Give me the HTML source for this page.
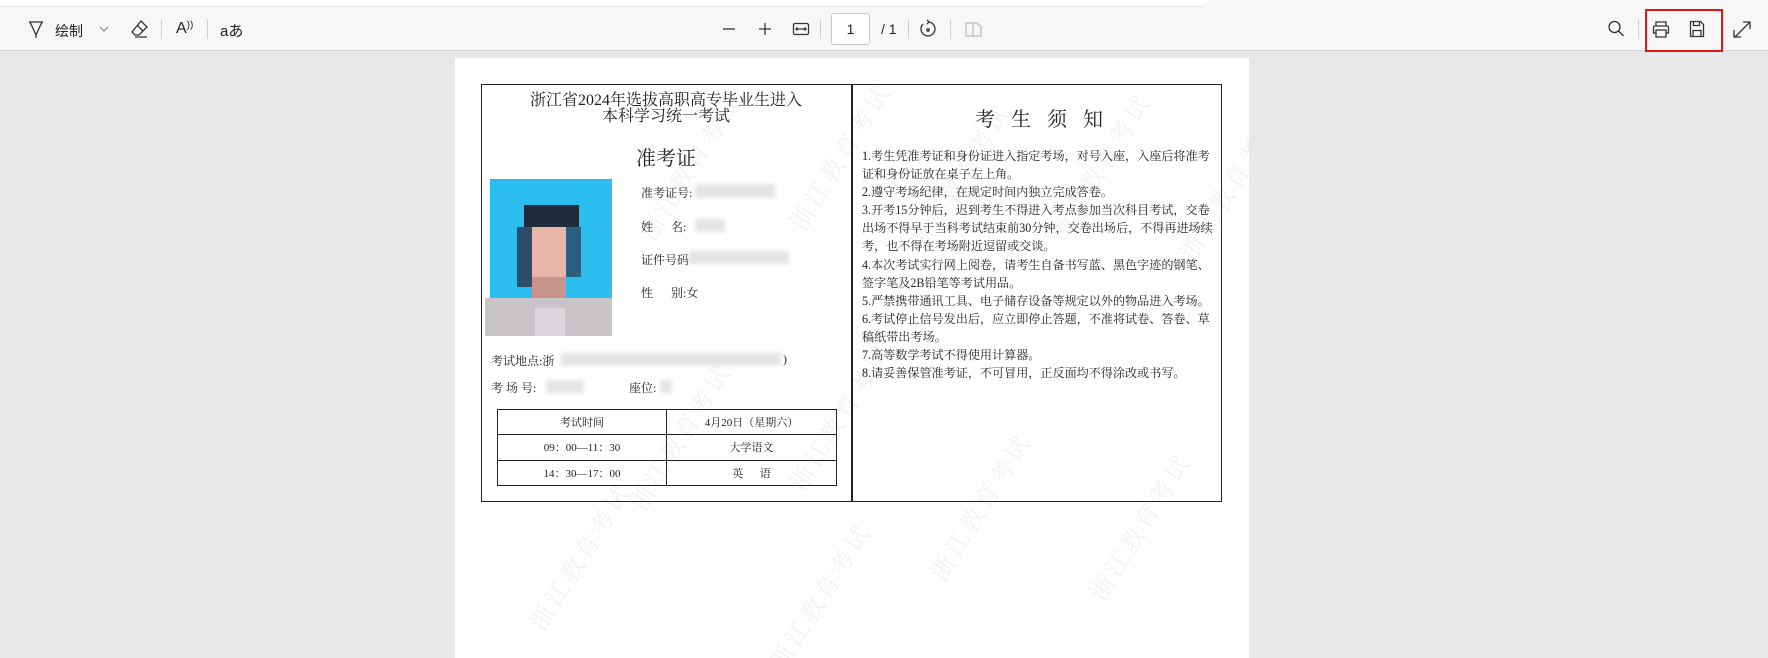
<!DOCTYPE html>
<html><head><meta charset="utf-8">
<style>
*{margin:0;padding:0;box-sizing:border-box}
body{width:1768px;height:626px;overflow:hidden;background:#e8e8e8;font-family:"Liberation Serif","Noto Serif CJK SC",serif;position:relative}
.top{position:absolute;left:0;top:0;width:1768px;height:51px;background:#f7f7f7;border-bottom:1px solid #d6d6d6}
.strip{position:absolute;left:0;top:0;width:1208px;height:7px;background:#fff;border-radius:0 0 8px 0;border-bottom:1px solid #e4e4e4}
.ic{position:absolute;top:19px}
.sep{position:absolute;top:19px;width:1px;height:20px;background:#cfcfcf}
.t{position:absolute;font-family:"Liberation Sans","Noto Sans CJK SC",sans-serif;color:#222}
.page{position:absolute;left:455px;top:58px;width:794px;height:600px;background:#fff;overflow:hidden}
.a{position:absolute;white-space:nowrap;color:#222}
.wm{position:absolute;color:#f1f1f1;font-size:24px;transform:rotate(-58deg);white-space:nowrap;letter-spacing:4px;font-family:"Noto Serif CJK SC",serif}
.blur{position:absolute;background:#e4e4e4;filter:blur(2px)}
.px{position:absolute}
</style></head><body>
<div class="top">
<div class="strip"></div>
<svg class="ic" style="left:27px" width="18" height="20" viewBox="0 0 18 20" fill="none" stroke="#333" stroke-width="1.3"><path d="M2 3h14M3 3l6 13 6-13M9 16v3"/></svg>
<div class="t" style="left:55px;top:21px;font-size:14px">绘制</div>
<svg class="ic" style="left:99px;top:26px" width="10" height="6" viewBox="0 0 10 6" fill="none" stroke="#777" stroke-width="1.1"><path d="M1 1l4 4 4-4"/></svg>
<svg class="ic" style="left:131px" width="18" height="20" viewBox="0 0 18 20" fill="none" stroke="#333" stroke-width="1.3"><path d="M10 2l6 6-8 8H4l-3-3z M6 6l6 6 M4 18h12"/></svg>
<div class="sep" style="left:161px"></div>
<div class="t" style="left:176px;top:20px;font-size:16px">A<span style="font-size:10px;vertical-align:top">))</span></div>
<div class="sep" style="left:207px"></div>
<div class="t" style="left:220px;top:20px;font-size:15px">aあ</div>

<svg class="ic" style="left:721px" width="16" height="20"><path d="M2 10h12" stroke="#333" stroke-width="1.3"/></svg>
<svg class="ic" style="left:757px" width="16" height="20"><path d="M2 10h12M8 4v12" stroke="#333" stroke-width="1.3"/></svg>
<svg class="ic" style="left:792px" width="18" height="20" fill="none" stroke="#333" stroke-width="1.3"><rect x="1.5" y="4.5" width="15" height="11" rx="1.5"/><path d="M4 10h10M5.5 8.5L4 10l1.5 1.5M12.5 8.5L14 10l-1.5 1.5"/></svg>
<div class="sep" style="left:820px"></div>
<div style="position:absolute;left:831px;top:13px;width:39px;height:32px;background:#fff;border:1px solid #c8c8c8;border-radius:3px;font-family:'Liberation Sans',sans-serif;font-size:14px;text-align:center;line-height:30px;color:#222">1</div>
<div class="t" style="left:881px;top:21px;font-size:14px">/ 1</div>
<div class="sep" style="left:908px"></div>
<svg class="ic" style="left:919px" width="18" height="20" fill="none" stroke="#333" stroke-width="1.3"><path d="M4 5a7 7 0 1 0 6-2l-2-2M10 3l-2 2"/><circle cx="9" cy="11" r="1.2"/></svg>
<div class="sep" style="left:950px"></div>
<svg class="ic" style="left:964px" width="18" height="20" fill="none" stroke="#bbb" stroke-width="1.2"><path d="M2 4h7v13H2zM9 4h4l4 4v9H9"/></svg>

<svg class="ic" style="left:1607px" width="18" height="20" fill="none" stroke="#333" stroke-width="1.3"><circle cx="7.5" cy="8" r="5.5"/><path d="M11.5 12l5 5"/></svg>
<div class="sep" style="left:1638px"></div>
<svg class="ic" style="left:1652px" width="18" height="20" fill="none" stroke="#333" stroke-width="1.3"><path d="M4 7V3h10v4M3 7h12a1.5 1.5 0 0 1 1.5 1.5V14H14M4 14H1.5V8.5A1.5 1.5 0 0 1 3 7M4 11h10v7H4z"/></svg>
<svg class="ic" style="left:1688px" width="18" height="20" fill="none" stroke="#333" stroke-width="1.3"><path d="M2.5 2.5h10l3 3v12h-13zM5.5 2.5v4h6v-4M5 17.5v-6h8v6"/></svg>
<div style="position:absolute;left:1645px;top:9px;width:78px;height:43px;border:2px solid #e8141b"></div>
<svg class="ic" style="left:1733px" width="18" height="20" fill="none" stroke="#333" stroke-width="1.3"><path d="M2 18L16 4M10 3h7v7M1 11v7h7"/></svg>
</div>

<div class="page">
<div class="wm" style="left:150px;top:90px">浙江教育考试</div>
<div class="wm" style="left:300px;top:80px">浙江教育考试</div>
<div class="wm" style="left:420px;top:100px">浙江教育考试</div>
<div class="wm" style="left:560px;top:90px">浙江教育考试</div>
<div class="wm" style="left:690px;top:110px">浙江教育考试</div>
<div class="wm" style="left:140px;top:360px">浙江教育考试</div>
<div class="wm" style="left:300px;top:340px">浙江教育考试</div>
<div class="wm" style="left:440px;top:430px">浙江教育考试</div>
<div class="wm" style="left:600px;top:450px">浙江教育考试</div>
<div class="wm" style="left:280px;top:520px">浙江教育考试</div>
<div class="wm" style="left:40px;top:480px">浙江教育考试</div>

<div style="position:absolute;left:26px;top:26px;width:741px;height:418px;border:1.5px solid #222"></div>
<div style="position:absolute;left:396px;top:26px;width:1.5px;height:418px;background:#222"></div>

<div class="a" style="left:26px;width:370px;text-align:center;top:35px;font-size:16px;line-height:16px">浙江省2024年选拔高职高专毕业生进入<br>本科学习统一考试</div>
<div class="a" style="left:26px;width:370px;text-align:center;top:84px;font-size:20px">准考证</div>

<div class="px" style="left:35px;top:121px;width:122px;height:134px;background:#2cbdf0"></div>
<div class="px" style="left:69px;top:147px;width:55px;height:22px;background:#1d2b3a"></div>
<div class="px" style="left:62px;top:169px;width:15px;height:60px;background:#2b4d68"></div>
<div class="px" style="left:111px;top:169px;width:15px;height:50px;background:#2b5f80"></div>
<div class="px" style="left:77px;top:169px;width:34px;height:80px;background:#e8b5a8"></div>
<div class="px" style="left:77px;top:219px;width:34px;height:40px;background:#c9958a"></div>
<div class="px" style="left:30px;top:240px;width:127px;height:38px;background:#c8c4c8"></div>
<div class="px" style="left:80px;top:250px;width:30px;height:28px;background:#dad6dc"></div>

<div class="a" style="left:186px;top:126px;font-size:12px">准考证号:</div>
<div class="blur" style="left:240px;top:126px;width:80px;height:14px"></div>
<div class="a" style="left:186px;top:160px;font-size:12px">姓&nbsp;&nbsp;&nbsp;&nbsp;&nbsp;&nbsp;名:</div>
<div class="blur" style="left:240px;top:161px;width:30px;height:13px"></div>
<div class="a" style="left:186px;top:193px;font-size:12px">证件号码</div>
<div class="blur" style="left:234px;top:193px;width:100px;height:13px"></div>
<div class="a" style="left:186px;top:226px;font-size:12px">性&nbsp;&nbsp;&nbsp;&nbsp;&nbsp;&nbsp;别:女</div>

<div class="a" style="left:36px;top:294px;font-size:12px">考试地点:浙</div>
<div class="blur" style="left:106px;top:295px;width:220px;height:13px"></div>
<div class="a" style="left:328px;top:294px;font-size:12px">)</div>
<div class="a" style="left:36px;top:321px;font-size:12px">考&nbsp;场&nbsp;号:</div>
<div class="blur" style="left:91px;top:322px;width:38px;height:13px"></div>
<div class="a" style="left:174px;top:321px;font-size:12px">座位:</div>
<div class="blur" style="left:205px;top:322px;width:12px;height:13px"></div>

<table style="position:absolute;left:42px;top:351px;width:340px;height:77px;border-collapse:collapse;font-size:11px;color:#222">
<tr><td style="border:1.5px solid #222;text-align:center;width:169px">考试时间</td><td style="border:1.5px solid #222;text-align:center">4月20日（星期六）</td></tr>
<tr><td style="border:1.5px solid #222;text-align:center">09：00—11：30</td><td style="border:1.5px solid #222;text-align:center">大学语文</td></tr>
<tr><td style="border:1.5px solid #222;text-align:center">14：30—17：00</td><td style="border:1.5px solid #222;text-align:center">英&nbsp;&nbsp;&nbsp;&nbsp;&nbsp;&nbsp;语</td></tr>
</table>

<div class="a" style="left:520px;top:45px;font-size:20px;letter-spacing:16px">考生须知</div>
<div class="a" style="left:407px;top:89px;font-size:12.1px;line-height:18.1px">
1.考生凭准考证和身份证进入指定考场，对号入座，入座后将准考<br>
证和身份证放在桌子左上角。<br>
2.遵守考场纪律，在规定时间内独立完成答卷。<br>
3.开考15分钟后，迟到考生不得进入考点参加当次科目考试，交卷<br>
出场不得早于当科考试结束前30分钟，交卷出场后，不得再进场续<br>
考，也不得在考场附近逗留或交谈。<br>
4.本次考试实行网上阅卷，请考生自备书写蓝、黑色字迹的钢笔、<br>
签字笔及2B铅笔等考试用品。<br>
5.严禁携带通讯工具、电子储存设备等规定以外的物品进入考场。<br>
6.考试停止信号发出后，应立即停止答题，不准将试卷、答卷、草<br>
稿纸带出考场。<br>
7.高等数学考试不得使用计算器。<br>
8.请妥善保管准考证，不可冒用，正反面均不得涂改或书写。</div>
</div>
</body></html>
